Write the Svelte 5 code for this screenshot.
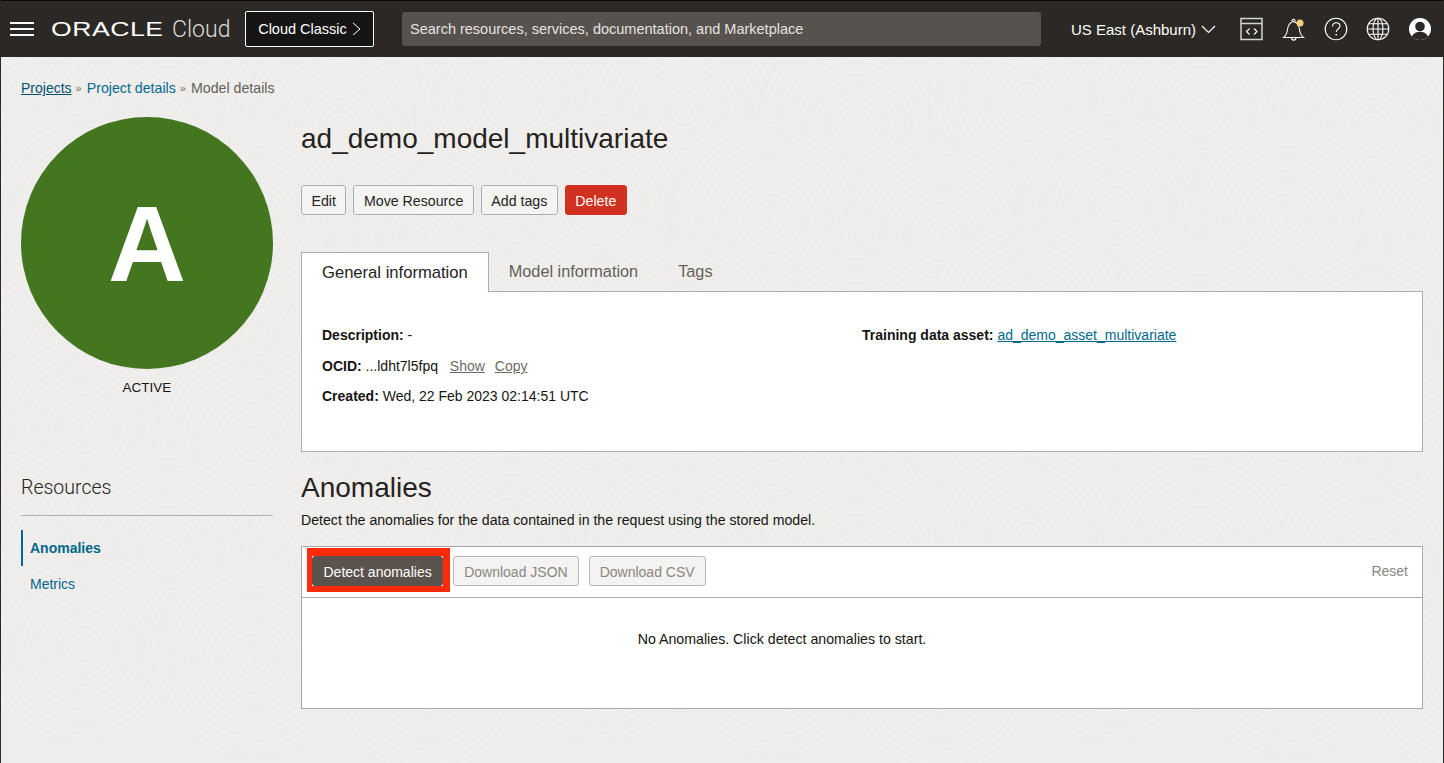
<script>
	const actions = ['Edit', 'Move Resource', 'Add tags'];
	const tabs = ['General information', 'Model information', 'Tags'];
	let activeTab = $state('General information');
	let activeResource = $state('Anomalies');

	// faint fingerprint swirls behind the page
	const swirls = [];
	for (let row = 0; row < 6; row++) {
		for (let col = 0; col < 10; col++) {
			swirls.push({ x: col * 172 + (row % 2 ? 86 : 0) - 5, y: row * 110 + 41 + (col % 3) * 14 });
		}
	}
	const rings = Array.from({ length: 16 }, (_, i) => 5 + i * 6);
</script>

<div class="console">
	<svg class="texture" width="1444" height="707" aria-hidden="true">
		{#each swirls as s}
			<g transform="translate({s.x} {s.y})">
				<circle r="100" fill="#eeedeb" />
				{#each rings as r}
					<circle {r} fill="none" stroke="#f0efed" stroke-width="2" />
				{/each}
			</g>
		{/each}
	</svg>

	<header class="topbar">
		<button class="icon-btn menu" aria-label="Menu">
			<svg width="24" height="14" viewBox="0 0 24 14"><path d="M0 1h24M0 7h24M0 13h24" stroke="#fff" stroke-width="2" /></svg>
		</button>
		<div class="brand">
			<span class="oracle">ORACLE</span>
			<span class="cloud">Cloud</span>
		</div>
		<button class="classic">
			Cloud Classic
			<svg width="9" height="14" viewBox="0 0 9 14"><path d="M1 1l7 6-7 6" fill="none" stroke="#fff" stroke-width="1" /></svg>
		</button>
		<div class="search">Search resources, services, documentation, and Marketplace</div>
		<div class="region">
			US East (Ashburn)
			<svg width="15" height="9" viewBox="0 0 15 9"><path d="M1 1l6.500 6.500L14 1" fill="none" stroke="#fff" stroke-width="1.200" /></svg>
		</div>
		<div class="tools">
			<svg width="24" height="24" viewBox="0 0 24 24" fill="none" stroke="#d4d4d2">
				<rect x="1" y="1.500" width="21" height="21" stroke-width="1.500" />
				<path d="M1 6.500h21" stroke-width="1.500" />
				<path d="M9.500 11.500L6.500 14.500l3 3M14 11.500l3 3-3 3" stroke="#fff" stroke-width="1.100" />
			</svg>
			<svg width="24" height="26" viewBox="0 0 24 26" fill="none" stroke="#fff" stroke-width="1.100">
				<path d="M1.500 21.500c2.500-2 3.500-4 4-8 .5-4 1.500-7 6-8 4 1 5.500 4 6 8 .5 4 1.500 6 4 8z" />
				<path d="M10 5.500c0-3 3-3 3 0M9.500 21.500c0 3.500 4.500 3.500 4.500 0" />
				<circle cx="18" cy="7" r="3.500" fill="#f5cf7d" stroke="none" />
			</svg>
			<svg width="24" height="24" viewBox="0 0 24 24" fill="none" stroke="#fff" stroke-width="1.100">
				<circle cx="12" cy="12" r="10.800" />
				<path d="M8.500 9.500c0-5 7.500-5 7.500-.5 0 3-3.800 3-3.800 6" />
				<path d="M12.200 17v1.500" stroke-width="1.400" />
			</svg>
			<svg width="24" height="24" viewBox="0 0 24 24" fill="none" stroke="#fff" stroke-width="1.100">
				<circle cx="12" cy="12" r="10.800" />
				<ellipse cx="12" cy="12" rx="5" ry="10.800" />
				<path d="M12 1.200v21.600M1.200 12h21.600M2.800 6.800h18.400M2.800 17.200h18.400" />
			</svg>
			<svg width="24" height="24" viewBox="0 0 24 24">
				<circle cx="12" cy="12" r="11" fill="#fff" />
				<circle cx="12" cy="9.500" r="4.800" fill="#2c2825" />
				<path d="M3.800 19.500c2-3.500 5-4.800 8.200-4.800s6.200 1.300 8.200 4.800c-2 2.200-5 3.500-8.200 3.500s-6.200-1.300-8.200-3.500z" fill="#2c2825" />
			</svg>
		</div>
	</header>

	<main class="page">
		<nav class="crumbs">
			<a href="#projects" class="first">Projects</a>
			<span class="sep">»</span>
			<a href="#project">Project details</a>
			<span class="sep">»</span>
			<span class="current">Model details</span>
		</nav>

		<div class="layout">
			<aside class="side">
				<div class="badge">A</div>
				<div class="state">ACTIVE</div>
				<h3>Resources</h3>
				<ul>
					{#each ['Anomalies', 'Metrics'] as item}
						<li class:active={item === activeResource}>
							<a href="#{item}" onclick={() => (activeResource = item)}>{item}</a>
						</li>
					{/each}
				</ul>
			</aside>

			<section class="content">
				<h1>ad_demo_model_multivariate</h1>
				<div class="actions">
					{#each actions as label}
						<button class="btn">{label}</button>
					{/each}
					<button class="btn danger">Delete</button>
				</div>

				<div class="tabs">
					{#each tabs as tab}
						<button class="tab" class:selected={tab === activeTab} onclick={() => (activeTab = tab)}>{tab}</button>
					{/each}
				</div>
				<div class="panel">
					<div class="col">
						<p class="lead"><b>Description:</b> -</p>
						<p><b>OCID:</b> ...ldht7l5fpq <a href="#show" class="muted">Show</a> <a href="#copy" class="muted">Copy</a></p>
						<p><b>Created:</b> Wed, 22 Feb 2023 02:14:51 UTC</p>
					</div>
					<div class="col">
						<p><b>Training data asset:</b> <a href="#asset" class="link">ad_demo_asset_multivariate</a></p>
					</div>
				</div>

				<h2>Anomalies</h2>
				<p class="intro">Detect the anomalies for the data contained in the request using the stored model.</p>

				<div class="table">
					<div class="toolbar">
						<div class="primary-wrap">
							<button class="btn primary">Detect anomalies</button>
							<span class="highlight"></span>
						</div>
						<button class="btn off">Download JSON</button>
						<button class="btn off">Download CSV</button>
						<span class="reset">Reset</span>
					</div>
					<div class="empty">No Anomalies. Click detect anomalies to start.</div>
				</div>
			</section>
		</div>
	</main>
</div>

<style>
	:global(body) {
		background: #eeedeb;
		overflow: hidden;
	}

	.console {
		position: relative;
		height: 763px;
		overflow: hidden;
		box-sizing: border-box;
		border-left: 1px solid #2c2825;
		border-right: 1px solid #2c2825;
		font-family: "Liberation Sans", Arial, sans-serif;
		font-size: 14px;
		color: #161513;
		background-color: #eeedeb;
	}

	.texture {
		position: absolute;
		top: 56px;
		left: 0;
	}

	.topbar {
		position: relative;
		display: flex;
		align-items: center;
		height: 57px;
		box-sizing: border-box;
		border-top: 1px solid #0d0c0b;
		background: #2c2825;
		color: #fff;
	}

	.icon-btn {
		background: none;
		border: none;
		padding: 0;
		display: flex;
	}

	.menu { margin-left: 9px; }

	.brand {
		display: flex;
		align-items: center;
		width: 194px;
		margin-left: 17px;
	}

	.oracle {
		display: inline-block;
		width: 121px;
		font-size: 20px;
		letter-spacing: 0.4px;
		transform: scaleX(1.33);
		transform-origin: left center;
		color: #fff;
	}

	.cloud {
		font-family: Roboto, "Liberation Sans", sans-serif;
		font-size: 23px;
		font-weight: 300;
		color: #dcdbd9;
	}

	.classic {
		display: flex;
		align-items: center;
		justify-content: center;
		gap: 5px;
		width: 129px;
		height: 36px;
		background: #161513;
		border: 1px solid #fff;
		border-radius: 2px;
		color: #fff;
		font: 14.500px "Liberation Sans", Arial, sans-serif;
	}

	.search {
		width: 639px;
		height: 34px;
		margin-left: 28px;
		padding-left: 8px;
		box-sizing: border-box;
		line-height: 34px;
		font-size: 14.500px;
		background: #57524e;
		border-radius: 3px;
		color: #e4e3e1;
		white-space: nowrap;
	}

	.region {
		display: flex;
		align-items: center;
		gap: 5px;
		margin-left: 30px;
		font-size: 15px;
		white-space: nowrap;
	}

	.tools {
		display: flex;
		align-items: center;
		gap: 18px;
		margin-left: 24px;
	}

	.page {
		position: relative;
		padding: 22px 20px 0;
	}

	.crumbs {
		display: flex;
		align-items: center;
		gap: 4px;
		height: 18px;
		font-size: 14.200px;
	}

	.crumbs a {
		color: #006b8f;
		text-decoration: none;
	}

	.crumbs a.first {
		color: #00526f;
		text-decoration: underline;
		font-size: 14px;
	}

	.sep {
		font-size: 11px;
		color: #6f6a65;
		margin-right: 1px;
	}

	.current { color: #655f5a; }

	.layout {
		display: grid;
		grid-template-columns: 252px 1fr;
		column-gap: 28px;
	}

	.side { padding-top: 20px; }

	.badge {
		width: 252px;
		height: 252px;
		border-radius: 50%;
		background: #43761f;
		color: #fff;
		display: flex;
		align-items: center;
		justify-content: center;
		font-size: 108px;
		font-weight: 700;
	}

	.state {
		text-align: center;
		margin-top: 11px;
		height: 16px;
		line-height: 16px;
		font-size: 13.500px;
	}

	.side h3 {
		margin: 80px 0 0;
		font-family: Roboto, "Liberation Sans", sans-serif;
		font-size: 19.500px;
		font-weight: 300;
		line-height: 24px;
		padding-bottom: 15px;
		border-bottom: 1px solid #a9b2bb;
		color: #26231f;
	}

	.side ul {
		list-style: none;
		margin: 14px 0 0;
		padding: 0;
	}

	.side li {
		height: 36px;
		line-height: 36px;
		padding-left: 9px;
	}

	.side li a {
		color: #00688c;
		text-decoration: none;
	}

	.side li.active {
		padding-left: 7px;
		border-left: 2px solid #00688c;
		font-weight: 700;
	}

	h1 {
		margin: 25px 0 0;
		font-size: 28px;
		font-weight: 400;
		line-height: 34px;
		color: #26231f;
	}

	.actions {
		display: flex;
		gap: 7px;
		margin-top: 29px;
	}

	.actions .btn {
		font-size: 14.200px;
		padding: 1px 9.500px 0;
	}

	.btn {
		height: 30px;
		padding: 1px 10px 0;
		box-sizing: border-box;
		background: #f4f3f1;
		border: 1px solid #a5afbb;
		border-radius: 3px;
		color: #26231f;
		font: 14px "Liberation Sans", Arial, sans-serif;
		white-space: nowrap;
	}

	.btn.danger {
		background: #d03120;
		border-color: #d03120;
		color: #fff;
	}

	.tabs {
		display: flex;
		margin-top: 37px;
		height: 39px;
		box-sizing: border-box;
		align-items: stretch;
	}

	.tab {
		padding: 0 20px;
		background: none;
		border: none;
		font: 16.300px "Liberation Sans", Arial, sans-serif;
		color: #655f5a;
	}

	.tab.selected {
		background: #fff;
		color: #26231f;
		font-size: 16.600px;
		border: 1px solid #a5afbb;
		border-bottom: none;
		height: 40px;
		position: relative;
		z-index: 1;
	}

	.panel {
		display: grid;
		grid-template-columns: 540px 1fr;
		height: 161px;
		box-sizing: border-box;
		padding: 34px 20px 0;
		background: #fff;
		border: 1px solid #a5afbb;
	}

	.panel p {
		margin: 0 0 12px;
		line-height: 18px;
	}

	.panel p.lead { margin-bottom: 13px; }

	.muted {
		color: #6f6a65;
		margin-left: 8px;
	}

	.muted + .muted { margin-left: 6px; }

	.link { color: #00688c; }

	h2 {
		margin: 20px 0 0;
		font-size: 28px;
		font-weight: 400;
		line-height: 32px;
		color: #26231f;
	}

	.intro {
		margin: 7px 0 0;
		font-size: 14.150px;
		line-height: 18px;
	}

	.table {
		margin-top: 17px;
		height: 163px;
		box-sizing: border-box;
		background: #fff;
		border: 1px solid #aaa9a6;
	}

	.toolbar {
		display: flex;
		align-items: center;
		gap: 10px;
		height: 51px;
		padding: 0 14px 2px 10px;
		box-sizing: border-box;
		border-bottom: 1px solid #aaa9a6;
	}

	.primary-wrap {
		position: relative;
		display: flex;
	}

	.btn.primary {
		padding: 1px 10.500px 0;
		background: #5b524d;
		border-color: #5b524d;
		color: #fff;
	}

	.highlight {
		position: absolute;
		inset: -8px -7px -6px -5px;
		border-style: solid;
		border-color: #fb2a0a;
		border-width: 8px 7px 6px 5px;
		pointer-events: none;
	}

	.btn.off {
		color: #8a8683;
		border-color: #b9b7b3;
		background: #f4f3f1;
	}

	.reset {
		margin-left: auto;
		font-size: 14px;
		color: #8a8683;
	}

	.empty {
		text-align: center;
		padding: 32px 0 0 0;
		margin-right: 160px;
		line-height: 18px;
		font-size: 14.200px;
	}
</style>
